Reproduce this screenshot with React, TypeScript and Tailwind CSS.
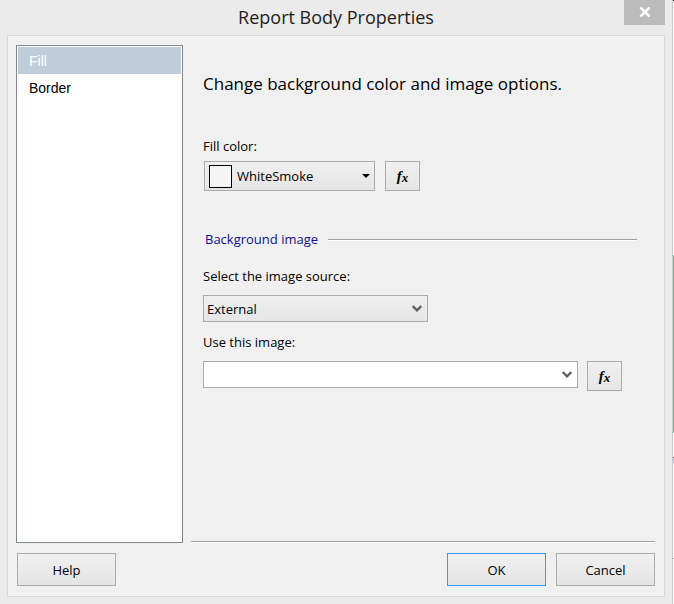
import { useState } from "react";
import type { ReactNode } from "react";

const pages = ["Fill", "Border"];

function Chevron() {
  return (
    <svg
      className="pointer-events-none absolute right-[6px] top-[10px]"
      width="10"
      height="8"
      viewBox="0 0 10 8"
      fill="none"
    >
      <path d="M0.7 1L5 5.4L9.3 1" stroke="#606060" strokeWidth="2.4" />
    </svg>
  );
}

function ExpressionButton({ label }: { label: string }) {
  return (
    <button
      type="button"
      aria-label={label}
      className="flex h-[30px] w-[35px] shrink-0 items-center justify-center border border-[#acacac] bg-linear-to-b from-[#f0f0f0] to-[#e5e5e5] font-['Liberation_Serif',serif] text-[15px] leading-4 font-bold italic text-black"
    >
      f<span className="pt-[3px] text-[13px] leading-3">x</span>
    </button>
  );
}

function DialogButton({
  children,
  primary,
}: {
  children: ReactNode;
  primary?: boolean;
}) {
  return (
    <button
      type="button"
      className={
        "h-[33px] w-[99px] border bg-linear-to-b from-[#f0f0f0] to-[#e5e5e5] " +
        (primary ? "border-[#3399ff]" : "border-[#acacac]")
      }
    >
      {children}
    </button>
  );
}

export default function App() {
  const [page, setPage] = useState("Fill");
  const [source, setSource] = useState("External");
  const [image, setImage] = useState("");

  return (
    <div className="flex min-h-screen bg-white font-['Open_Sans',sans-serif] text-[13px] leading-5 text-black">
      <div className="flex flex-1 flex-col border-r border-[#c8c8c8] bg-[#ebebeb] px-[7px] pb-[7px]">
        <header className="grid h-[35px] grid-cols-[1fr_auto_1fr] items-start">
          <h1 className="col-start-2 pt-1 text-[18px] leading-[26px] text-[#222222]">
            Report Body Properties
          </h1>
          <button
            type="button"
            aria-label="Close"
            className="flex h-[25px] w-[41px] items-center justify-center justify-self-end bg-[#bcbcbc] pb-[2px]"
          >
            <svg width="12" height="10" viewBox="0 0 12 10" fill="none">
              <path d="M1.5 0.5L10.5 9.5M10.5 0.5L1.5 9.5" stroke="white" strokeWidth="2.6" />
            </svg>
          </button>
        </header>

        <div className="flex flex-1 flex-col border border-[#d9d9d9] bg-[#f0f0f0] px-2 pt-[9px] pb-[10px]">
          <div className="flex flex-1 gap-2">
            <nav className="w-[167px] shrink-0 border border-[#828790] bg-white p-px font-['Liberation_Sans',sans-serif] text-[14px]">
              {pages.map((name) => (
                <button
                  key={name}
                  type="button"
                  onClick={() => setPage(name)}
                  className={
                    "block h-[27px] w-full px-[11px] pt-px text-left " +
                    (page === name ? "bg-[#bfcddb] text-white" : "text-black")
                  }
                >
                  {name}
                </button>
              ))}
            </nav>

            <main className="mr-px mb-px flex-1 border-b border-[#a0a0a0] pl-3 shadow-[0_1px_0_white]">
              <h2 className="pt-[26px] text-[17px] leading-[26px]">
                Change background color and image options.
              </h2>

              <p id="fill-label" className="mt-[39px]">
                Fill color:
              </p>
              <div className="mt-[5px] flex gap-[10px] pl-px">
                <button
                  type="button"
                  aria-labelledby="fill-label fill-value"
                  className="flex h-[30px] w-[171px] items-center border border-[#acacac] bg-linear-to-b from-[#f0f0f0] to-[#e5e5e5] px-1"
                >
                  <span className="h-[23px] w-[23px] border border-black bg-[#f5f5f5]" />
                  <span id="fill-value" className="flex-1 pl-[5px] text-left">
                    WhiteSmoke
                  </span>
                  <svg width="8" height="4" viewBox="0 0 8 4">
                    <path d="M0 0H8L4 4Z" fill="black" />
                  </svg>
                </button>
                <ExpressionButton label="Fill color expression" />
              </div>

              <h3 className="mt-[38px] mr-[18px] flex items-center gap-[10px] pl-[2px] text-[#10108c]">
                Background image
                <span className="h-px flex-1 bg-[#a0a0a0] shadow-[0_1px_0_white]" />
              </h3>

              <label htmlFor="source" className="mt-[17px] block">
                Select the image source:
              </label>
              <div className="relative mt-[9px] w-[225px]">
                <select
                  id="source"
                  value={source}
                  onChange={(e) => setSource(e.target.value)}
                  className="block h-[27px] w-full appearance-none border border-[#acacac] bg-linear-to-b from-[#f0f0f0] to-[#e5e5e5] pl-[3px]"
                >
                  <option>External</option>
                  <option>Embedded</option>
                  <option>Database</option>
                </select>
                <Chevron />
              </div>

              <label htmlFor="image" className="mt-[10px] block">
                Use this image:
              </label>
              <div className="mt-[9px] mr-[18px] flex gap-[9px]">
                <div className="relative max-w-[375px] flex-1">
                  <select
                    id="image"
                    value={image}
                    onChange={(e) => setImage(e.target.value)}
                    className="block h-[27px] w-full appearance-none border border-[#acacac] bg-white pl-[3px]"
                  >
                    <option value=""></option>
                  </select>
                  <Chevron />
                </div>
                <ExpressionButton label="Image expression" />
              </div>
            </main>
          </div>

          <footer className="mt-[10px] flex gap-[10px] px-px">
            <DialogButton>Help</DialogButton>
            <span className="flex-1" />
            <DialogButton primary>OK</DialogButton>
            <DialogButton>Cancel</DialogButton>
          </footer>
        </div>
      </div>

      {/* edge of the window behind the dialog */}
      <div className="flex w-px flex-col">
        <span className="h-px bg-black" />
        <span className="mt-[254px] h-[178px] bg-[#6fbfa3]" />
        <span className="mt-[24px] h-px bg-[#555555]" />
        <span className="h-[5px] bg-[#a8d8f0]" />
        <span className="mt-[95px] h-px bg-[#a0a0a0]" />
      </div>
    </div>
  );
}
